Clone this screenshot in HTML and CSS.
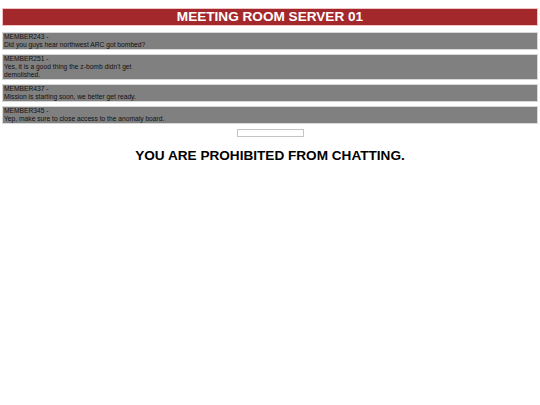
FILE: index.html
```html
<!DOCTYPE html>
<html lang="en">
<head>
  <meta charset="UTF-8">
  <meta name="viewport" content="width=device-width, initial-scale=1.0">
  <title>Meeting Room Server 01</title>
  <link rel="stylesheet" href="styles.css">
</head>
<body>

<div class="room">
  <h1 class="room-title">MEETING ROOM SERVER 01</h1>

  <div class="messages">
    <div class="message">
      <div class="sender">MEMBER243 -</div>
      <div class="text">Did you guys hear northwest ARC got bombed?</div>
    </div>
    <div class="message">
      <div class="sender">MEMBER251 -</div>
      <div class="text">Yes, it is a good thing the z-bomb didn't get<br>demolished.</div>
    </div>
    <div class="message">
      <div class="sender">MEMBER437 -</div>
      <div class="text">Mission is starting soon, we better get ready.</div>
    </div>
    <div class="message">
      <div class="sender">MEMBER345 -</div>
      <div class="text">Yep, make sure to close access to the anomaly board.</div>
    </div>
  </div>

  <div class="chat-box">
    <input type="text" id="chatInput" disabled>
  </div>

  <h2 class="notice">YOU ARE PROHIBITED FROM CHATTING.</h2>
</div>

</body>
</html>
```

FILE: styles.css
```css
body {
  margin: 0;
  padding: 9px 3px;
  font-family: "Liberation Sans", Arial, sans-serif;
  background-color: #fff;
}
.room-title {
  margin: 0;
  height: 16px;
  line-height: 16px;
  font-size: 13.6px;
  font-weight: bold;
  text-align: center;
  color: #fff;
  background-color: #a3282b;
  box-shadow: 0 0 0 1px #f0c4c4;
}
.messages {
  display: flex;
  flex-direction: column;
  gap: 6px;
  margin-top: 8px;
}
.message {
  padding: 0 1px;
  font-size: 6.7px;
  line-height: 8px;
  color: #111;
  background-color: #808080;
  box-shadow: 0 0 0 1px #d8d8d8;
}
.chat-box {
  display: flex;
  justify-content: center;
  margin-top: 6px;
}
.chat-box input {
  box-sizing: border-box;
  width: 67px;
  height: 8px;
  margin: 0;
  padding: 0;
  border: 1px solid #c4c4c4;
  background-color: #fff;
}
.notice {
  margin: 11px 0 0;
  font-size: 13.6px;
  font-weight: bold;
  text-align: center;
  color: #000;
}
```
